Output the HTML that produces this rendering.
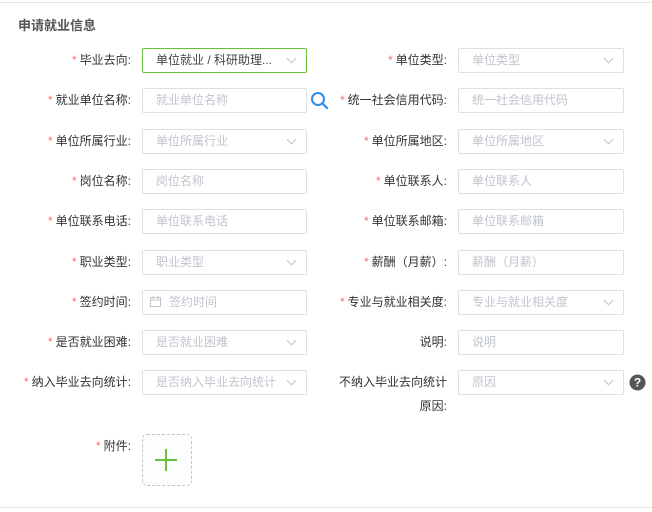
<!DOCTYPE html>
<html><head><meta charset="utf-8"><style>
body{margin:0;width:652px;height:512px;background:#fff;position:relative;overflow:hidden;font-family:"Liberation Sans","Noto Sans CJK SC",sans-serif;font-size:12px;color:#333}
.tl{position:absolute;left:0;right:0;top:2px;border-top:1px solid #e4e4e4}
.bl{position:absolute;left:0;right:0;top:507px;border-top:1px solid #e4e4e4}
.title{position:absolute;left:18px;top:15px;font-weight:bold;color:#555;font-size:13px}
.lab{position:absolute;text-align:right;line-height:24px;white-space:nowrap}
.lab i{color:#f56c6c;font-style:normal;margin-right:3px}
.inp{position:absolute;height:23px;border:1px solid #dcdfe6;border-radius:2px;line-height:23px;padding-left:13px;color:#c0c4cc;box-sizing:content-box;white-space:nowrap;overflow:hidden}
.inp.sel::after{content:"";position:absolute;right:11px;top:6px;width:6px;height:6px;border-right:1px solid #c0c4cc;border-bottom:1px solid #c0c4cc;transform:rotate(45deg)}
</style></head><body>
<div class="tl"></div><div class="bl"></div>
<div class="title">申请就业信息</div>

<div class="lab" style="right:521px;top:48px"><i>*</i>毕业去向:</div>
<div class="inp sel" style="left:142px;top:48px;width:150px;border-color:#67c23a;color:#444">单位就业 / 科研助理...</div>
<div class="lab" style="right:205px;top:48px"><i>*</i>单位类型:</div>
<div class="inp sel" style="left:458px;top:48px;width:151px">单位类型</div>

<div class="lab" style="right:521px;top:88px"><i>*</i>就业单位名称:</div>
<div class="inp" style="left:142px;top:88px;width:150px">就业单位名称</div>
<svg style="position:absolute;left:310px;top:91px" width="19" height="19" viewBox="0 0 19 19"><circle cx="8" cy="8" r="6" fill="none" stroke="#2d8cf0" stroke-width="2"/><path d="M12.5 12.5L17 17" stroke="#2d8cf0" stroke-width="2.2" stroke-linecap="round"/></svg>
<div class="lab" style="right:205px;top:88px"><i>*</i>统一社会信用代码:</div>
<div class="inp" style="left:458px;top:88px;width:151px">统一社会信用代码</div>

<div class="lab" style="right:521px;top:129px"><i>*</i>单位所属行业:</div>
<div class="inp sel" style="left:142px;top:129px;width:150px">单位所属行业</div>
<div class="lab" style="right:205px;top:129px"><i>*</i>单位所属地区:</div>
<div class="inp sel" style="left:458px;top:129px;width:151px">单位所属地区</div>

<div class="lab" style="right:521px;top:169px"><i>*</i>岗位名称:</div>
<div class="inp" style="left:142px;top:169px;width:150px">岗位名称</div>
<div class="lab" style="right:205px;top:169px"><i>*</i>单位联系人:</div>
<div class="inp" style="left:458px;top:169px;width:151px">单位联系人</div>

<div class="lab" style="right:521px;top:209px"><i>*</i>单位联系电话:</div>
<div class="inp" style="left:142px;top:209px;width:150px">单位联系电话</div>
<div class="lab" style="right:205px;top:209px"><i>*</i>单位联系邮箱:</div>
<div class="inp" style="left:458px;top:209px;width:151px">单位联系邮箱</div>

<div class="lab" style="right:521px;top:250px"><i>*</i>职业类型:</div>
<div class="inp sel" style="left:142px;top:250px;width:150px">职业类型</div>
<div class="lab" style="right:205px;top:250px"><i>*</i>薪酬（月薪）:</div>
<div class="inp" style="left:458px;top:250px;width:151px">薪酬（月薪）</div>

<div class="lab" style="right:521px;top:290px"><i>*</i>签约时间:</div>
<div class="inp" style="left:142px;top:290px;width:137px;padding-left:26px">签约时间</div>
<svg style="position:absolute;left:150px;top:296px" width="11" height="11" viewBox="0 0 11 11"><rect x="0.5" y="1.5" width="10" height="9" fill="none" stroke="#c0c4cc"/><path d="M0.5 4h10M3 0v3M8 0v3" stroke="#c0c4cc"/></svg>
<div class="lab" style="right:205px;top:290px"><i>*</i>专业与就业相关度:</div>
<div class="inp sel" style="left:458px;top:290px;width:151px">专业与就业相关度</div>

<div class="lab" style="right:521px;top:330px"><i>*</i>是否就业困难:</div>
<div class="inp sel" style="left:142px;top:330px;width:150px">是否就业困难</div>
<div class="lab" style="right:205px;top:330px">说明:</div>
<div class="inp" style="left:458px;top:330px;width:151px">说明</div>

<div class="lab" style="right:521px;top:370px"><i>*</i>纳入毕业去向统计:</div>
<div class="inp sel" style="left:142px;top:370px;width:150px">是否纳入毕业去向统计</div>
<div class="lab" style="right:205px;top:370px;line-height:24px">不纳入毕业去向统计<br>原因:</div>
<div class="inp sel" style="left:458px;top:370px;width:151px">原因</div>
<svg style="position:absolute;left:629px;top:374px" width="17" height="17" viewBox="0 0 17 17"><circle cx="8.5" cy="8.5" r="8" fill="#555"/><text x="8.5" y="12.5" font-size="12" font-weight="bold" fill="#fff" text-anchor="middle" font-family="Liberation Sans">?</text></svg>

<div class="lab" style="right:521px;top:434px"><i>*</i>附件:</div>
<div style="position:absolute;left:142px;top:434px;width:48px;height:50px;border:1px dashed #c0c4cc;border-radius:5px;background:#fbfdff"></div>
<div style="position:absolute;left:155px;top:459px;width:22px;height:2px;background:#67c23a"></div>
<div style="position:absolute;left:165px;top:449px;width:2px;height:22px;background:#67c23a"></div>
</body></html>
